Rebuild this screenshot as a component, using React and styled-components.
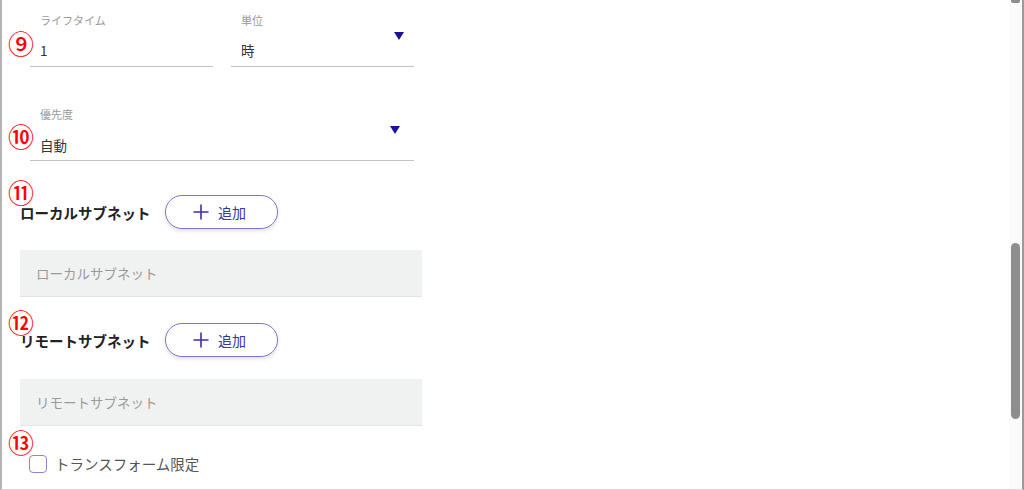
import React from "react";
import styled, { createGlobalStyle } from "styled-components";

const Global = createGlobalStyle`
  html, body { margin: 0; padding: 0; background: #fff; }
  body { font-family: "Noto Sans CJK JP", "Noto Sans", sans-serif; }
  * { box-sizing: border-box; }
`;

const Page = styled.div`
  position: relative;
  width: 1024px;
  height: 490px;
  display: flex;
  border-left: 2px solid #b4b4b4;
  border-right: 2px solid #9a9a9a;
  border-bottom: 1px solid #d6d6d6;
  overflow: hidden;
  background: #fff;
`;

const Form = styled.div`
  flex: 1;
  display: flex;
  flex-direction: column;
  align-items: flex-start;
  padding: 13px 0 0 18px;
`;

const FieldRow = styled.div`
  display: flex;
  gap: 18px;
  margin-left: 10px;
  margin-top: ${(p) => p.$top || 0}px;
`;

const Field = styled.div`
  position: relative;
  width: ${(p) => p.$w}px;
  padding: 0 10px ${(p) => p.$pb || 7}px;
  border-bottom: 1px solid #bfc4c4;
`;

const Label = styled.div`
  font-size: 11px;
  line-height: 14px;
  color: #9a9a9a;
`;

const Value = styled.div`
  margin-top: ${(p) => p.$gap || 14}px;
  font-size: 13.5px;
  line-height: 18px;
  color: #333;
`;

const Caret = styled.span`
  position: absolute;
  right: ${(p) => p.$right}px;
  top: ${(p) => p.$top}px;
  width: 0;
  height: 0;
  border-left: 5.5px solid transparent;
  border-right: 5.5px solid transparent;
  border-top: 8px solid #1c1299;
`;

const SectionHead = styled.div`
  display: flex;
  align-items: center;
  gap: 14px;
  margin-top: ${(p) => p.$top}px;
`;

const Heading = styled.div`
  font-size: 14.5px;
  font-weight: 700;
  color: #222;
`;

const AddButton = styled.button`
  width: 113px;
  height: 34px;
  border-radius: 17px;
  border: 1.5px solid #7d72d9;
  background: #fff;
  color: #3c31a8;
  font-family: inherit;
  font-size: 14px;
  display: flex;
  align-items: center;
  justify-content: center;
  gap: 8px;
  box-shadow: 0 2px 4px rgba(0, 0, 0, 0.12);
  padding: 0 4px 0 0;
`;

const ListBox = styled.div`
  margin-top: ${(p) => p.$top}px;
  width: 402px;
  height: 47px;
  background: #f0f2f2;
  border-bottom: 1px solid #e2e5e5;
  display: flex;
  align-items: center;
  padding-left: 16px;
  font-size: 13.5px;
  color: #9a9a9a;
`;

const CheckRow = styled.label`
  display: flex;
  align-items: center;
  gap: 8px;
  margin-top: 27px;
  margin-left: 9px;
  font-size: 14.5px;
  color: #555;
`;

const CheckBox = styled.span`
  width: 18px;
  height: 18px;
  border: 1.5px solid #8d84d8;
  border-radius: 4px;
  background: #fff;
`;

const Annotation = styled.span`
  position: absolute;
  left: 6px;
  top: ${(p) => p.$top}px;
  font-size: 26px;
  line-height: 26px;
  font-weight: 500;
  color: #ff0000;
  font-family: "Noto Sans CJK JP", sans-serif;
`;

const ScrollTrack = styled.div`
  width: 13px;
  display: flex;
  flex-direction: column;
  align-items: center;
  background: #fafafa;
`;

const ScrollTop = styled.div`
  width: 9px;
  height: 3px;
  background: #8e8e8e;
  border-radius: 0 0 2px 2px;
`;

const ScrollThumb = styled.div`
  width: 9px;
  height: 176px;
  margin-top: 240px;
  background: #8e8e8e;
  border-radius: 5px;
`;

const Plus = () => (
  <svg width="18" height="18" viewBox="0 0 18 18" fill="none">
    <path d="M9 1.5V16.5M1.5 9H16.5" stroke="#3c31a8" strokeWidth="1.6" />
  </svg>
);

export default function App() {
  return (
    <>
      <Global />
      <Page>
        <Form>
          <FieldRow>
            <Field $w={183}>
              <Label>ライフタイム</Label>
              <Value>1</Value>
            </Field>
            <Field $w={183}>
              <Label>単位</Label>
              <Value>時</Value>
              <Caret $right={10} $top={19} />
            </Field>
          </FieldRow>
          <FieldRow $top={40}>
            <Field $w={384} $pb={6}>
              <Label>優先度</Label>
              <Value $gap={15}>自動</Value>
              <Caret $right={14} $top={19} />
            </Field>
          </FieldRow>

          <SectionHead $top={34}>
            <Heading>ローカルサブネット</Heading>
            <AddButton>
              <Plus />
              追加
            </AddButton>
          </SectionHead>
          <ListBox $top={21}>ローカルサブネット</ListBox>

          <SectionHead $top={26}>
            <Heading>リモートサブネット</Heading>
            <AddButton>
              <Plus />
              追加
            </AddButton>
          </SectionHead>
          <ListBox $top={22}>リモートサブネット</ListBox>

          <CheckRow>
            <CheckBox />
            トランスフォーム限定
          </CheckRow>
        </Form>
        <ScrollTrack>
          <ScrollTop />
          <ScrollThumb />
        </ScrollTrack>
        <Annotation $top={30}>⑨</Annotation>
        <Annotation $top={123}>⑩</Annotation>
        <Annotation $top={179}>⑪</Annotation>
        <Annotation $top={309}>⑫</Annotation>
        <Annotation $top={429}>⑬</Annotation>
      </Page>
    </>
  );
}
